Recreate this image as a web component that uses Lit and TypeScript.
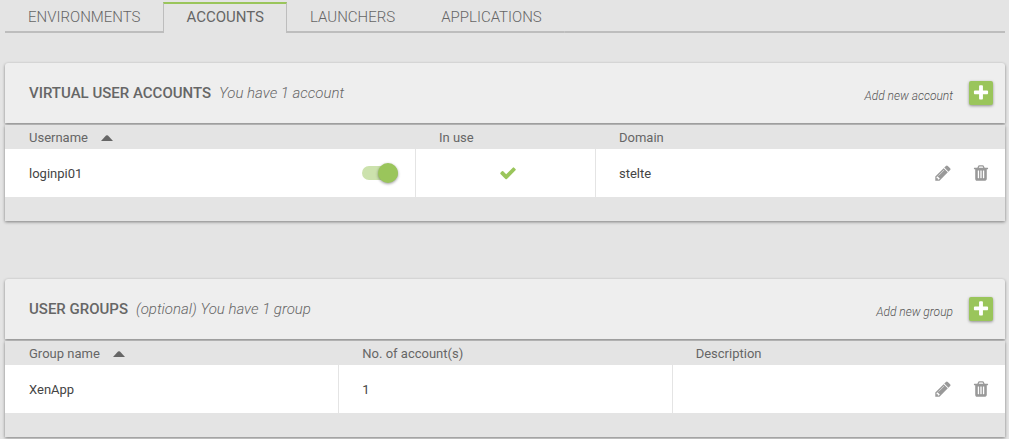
import { LitElement, html, css, svg, nothing } from "lit";
import { customElement, property } from "lit/decorators.js";

const ICONS = {
  plus: "M1600 736v192q0 40-28 68t-68 28h-416v416q0 40-28 68t-68 28h-192q-40 0-68-28t-28-68v-416h-416q-40 0-68-28t-28-68v-192q0-40 28-68t68-28h416v-416q0-40 28-68t68-28h192q40 0 68 28t28 68v416h416q40 0 68 28t28 68z",
  check:
    "M1671 566q0 40-28 68l-724 724-136 136q-28 28-68 28t-68-28l-136-136-362-362q-28-28-28-68t28-68l136-136q28-28 68-28t68 28l294 295 656-657q28-28 68-28t68 28l136 136q28 28 28 68z",
  pencil:
    "M491 1536l91-91-235-235-91 91v107h128v128h107zm523-928q0-22-22-22-10 0-17 7l-542 542q-7 7-7 17 0 22 22 22 10 0 17-7l542-542q7-7 7-17zm-54-192l416 416-832 832h-416v-416zm683 96q0 53-37 90l-166 166-416-416 166-165q36-38 90-38 53 0 91 38l235 234q37 39 37 91z",
  trash:
    "M704 1376v-704q0-14-9-23t-23-9h-64q-14 0-23 9t-9 23v704q0 14 9 23t23 9h64q14 0 23-9t9-23zm256 0v-704q0-14-9-23t-23-9h-64q-14 0-23 9t-9 23v704q0 14 9 23t23 9h64q14 0 23-9t9-23zm256 0v-704q0-14-9-23t-23-9h-64q-14 0-23 9t-9 23v704q0 14 9 23t23 9h64q14 0 23-9t9-23zm-544-992h448l-48-117q-7-9-17-11h-317q-10 2-17 11zm928 32v64q0 14-9 23t-23 9h-96v948q0 83-47 143.5t-113 60.5h-832q-66 0-113-58.5t-47-141.5v-952h-96q-14 0-23-9t-9-23v-64q0-14 9-23t23-9h309l70-167q15-37 54-63t79-26h320q40 0 79 26t54 63l70 167h309q14 0 23 9t9 23z",
};

const icon = (name: keyof typeof ICONS) =>
  html`<svg class="icon" viewBox="0 0 1792 1792" aria-hidden="true">${svg`<path d=${ICONS[name]} />`}</svg>`;

const sortArrow = html`<svg class="arrow" viewBox="0 0 12 6" aria-hidden="true">
  <path d="M0 6 L5 0.6 Q6 -0.2 7 0.6 L12 6 Z" />
</svg>`;

const rowActions = (name: string) => html`
  <span class="actions">
    <button class="act" type="button" aria-label="Edit ${name}">${icon("pencil")}</button>
    <button class="act" type="button" aria-label="Delete ${name}">${icon("trash")}</button>
  </span>
`;

const TABS = ["Environments", "Accounts", "Launchers", "Applications"];

@customElement("tab-bar")
class TabBar extends LitElement {
  @property() active = "Accounts";

  static styles = css`
    :host {
      display: block;
    }
    .tabs {
      display: flex;
      height: 31px;
    }
    .tab,
    .rest {
      background: linear-gradient(#bdbdbd, #bdbdbd) bottom / 100% 2px no-repeat border-box;
    }
    .tab {
      box-sizing: border-box;
      padding: 2px 22px 0;
      border: 1px solid transparent;
      border-top-width: 2px;
      border-bottom: 0;
      color: #666;
      font-size: 15px;
      font-weight: 300;
      line-height: 22px;
      text-decoration: none;
      text-transform: uppercase;
    }
    .active {
      border-color: #9ac55b #bdbdbd;
      background: none;
      font-weight: 400;
    }
    .rest {
      flex: 1;
    }
  `;

  render() {
    return html`<nav class="tabs">
      ${TABS.map((t) => html`<a class="tab ${t === this.active ? "active" : ""}" href="#${t.toLowerCase()}">${t}</a>`)}
      <span class="rest"></span>
    </nav>`;
  }
}

@customElement("app-root")
class AppRoot extends LitElement {
  static styles = css`
    :host {
      display: flow-root;
      box-sizing: border-box;
      min-height: 100vh;
      padding: 2px 4px 0 5px;
      background: #e4e4e4;
      color: #666;
      font-family: Roboto, "Liberation Sans", sans-serif;
      font-size: 13px;
    }
    main {
      display: grid;
      gap: 58px;
      padding-top: 30px;
    }
    .head {
      display: flex;
      align-items: center;
      height: 60px;
      padding: 0 12px 0 24px;
      background: #eee;
      border-radius: 3px 3px 0 0;
    }
    .head,
    .list {
      box-shadow: 0 1px 3px rgba(0, 0, 0, 0.45);
    }
    .title {
      margin: 0;
      font-size: 15px;
      font-weight: 500;
      line-height: 20px;
      text-transform: uppercase;
    }
    .note {
      flex: 1;
      margin: 0 0 0 8px;
      font-size: 15px;
      font-weight: 300;
      font-style: italic;
      line-height: 20px;
    }
    .add-label {
      padding-top: 6px;
      color: #555;
      font-size: 12px;
      font-weight: 300;
      font-style: italic;
      line-height: 16px;
    }
    .icon {
      display: block;
      width: 18px;
      height: 18px;
      fill: currentColor;
    }
    .add {
      display: grid;
      place-items: center;
      width: 24px;
      height: 24px;
      margin-left: 16px;
      padding: 0;
      border: 0;
      border-radius: 2px;
      background: #9ac55b;
      color: #fff;
      box-shadow: 0 1px 3px rgba(0, 0, 0, 0.4);
    }
    .list {
      margin-top: 2px;
      padding-bottom: 24px;
      background: #e4e4e4;
    }
    table {
      width: 100%;
      border-collapse: collapse;
      table-layout: fixed;
    }
    th,
    td {
      box-sizing: border-box;
      padding: 0 15px 0 24px;
      text-align: left;
      font-weight: 400;
    }
    th {
      height: 24px;
    }
    td {
      height: 48px;
      background: #fff;
      color: #444;
    }
    td + td {
      box-shadow: inset 1px 0 #e4e4e4;
    }
    .name {
      width: 41%;
    }
    .use {
      width: 18%;
    }
    .cell {
      display: flex;
      align-items: center;
      justify-content: space-between;
    }
    .mark {
      padding-right: 18px;
      color: #9ac55b;
    }
    .mark .icon {
      margin: 0 auto;
    }
    .arrow {
      width: 12px;
      height: 6px;
      margin-left: 10px;
      vertical-align: 1px;
      fill: #666;
    }
    .actions {
      display: flex;
      gap: 20px;
      margin-left: auto;
    }
    .act {
      padding: 0;
      border: 0;
      background: none;
      color: #999;
    }
    .toggle {
      appearance: none;
      display: flex;
      align-items: center;
      justify-content: flex-end;
      width: 36px;
      height: 14px;
      margin: 0 2px 0 0;
      border-radius: 7px;
      background: #cce2ad;
    }
    .toggle::before {
      content: "";
      width: 20px;
      height: 20px;
      border-radius: 50%;
      background: #9ac55b;
      box-shadow: 0 1px 3px rgba(0, 0, 0, 0.4);
    }
    .toggle:not(:checked) {
      justify-content: flex-start;
    }
  `;

  private section(title: string, note: string, add: string, table: unknown) {
    const id = title.toLowerCase().replace(/ /g, "-");
    return html`<section>
      <header class="head">
        <h2 class="title">${title}</h2>
        <p class="note">${note}</p>
        <label class="add-label" for=${id}>${add}</label>
        <button class="add" type="button" id=${id}>${icon("plus")}</button>
      </header>
      <div class="list">${table ?? nothing}</div>
    </section>`;
  }

  render() {
    return html`
      <tab-bar></tab-bar>
      <main>
        ${this.section(
          "Virtual user accounts",
          "You have 1 account",
          "Add new account",
          html`<table>
            <thead>
              <tr>
                <th class="name" aria-sort="ascending">Username ${sortArrow}</th>
                <th class="use">In use</th>
                <th>Domain</th>
              </tr>
            </thead>
            <tbody>
              <tr>
                <td>
                  <span class="cell">
                    <label for="enabled">loginpi01</label>
                    <input class="toggle" id="enabled" type="checkbox" checked />
                  </span>
                </td>
                <td class="mark">${icon("check")}</td>
                <td><span class="cell">stelte ${rowActions("loginpi01")}</span></td>
              </tr>
            </tbody>
          </table>`
        )}
        ${this.section(
          "User groups",
          "(optional) You have 1 group",
          "Add new group",
          html`<table>
            <thead>
              <tr>
                <th aria-sort="ascending">Group name ${sortArrow}</th>
                <th>No. of account(s)</th>
                <th>Description</th>
              </tr>
            </thead>
            <tbody>
              <tr>
                <td>XenApp</td>
                <td>1</td>
                <td><span class="cell">${rowActions("XenApp")}</span></td>
              </tr>
            </tbody>
          </table>`
        )}
      </main>
    `;
  }
}
